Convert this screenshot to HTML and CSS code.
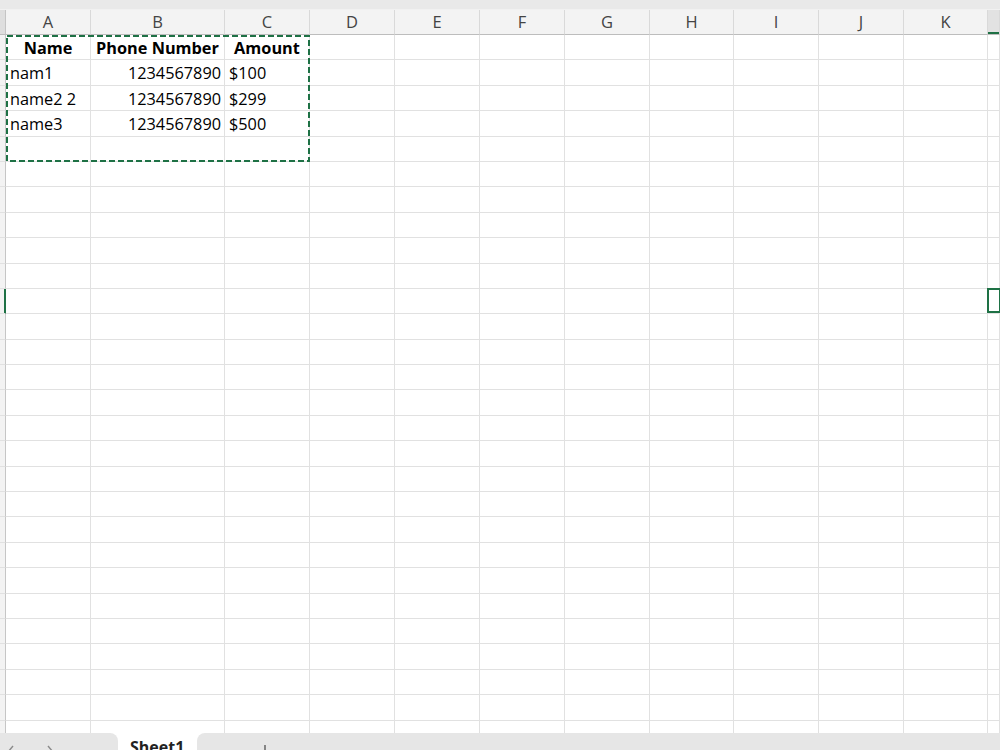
FILE: index.html
```html
<!DOCTYPE html>
<html lang="en">
<head>
    <meta charset="UTF-8">
    <meta name="viewport" content="width=device-width, initial-scale=1.0">
    <title>Book1 - Sheet1</title>
    <link rel="stylesheet" href="styles.css">
</head>
<body>
    <div class="topbar"></div>

    <div class="sheet">
        <div class="grid" id="grid">
            <div class="corner"></div>
            <div class="colhead">A</div>
            <div class="colhead">B</div>
            <div class="colhead">C</div>
            <div class="colhead">D</div>
            <div class="colhead">E</div>
            <div class="colhead">F</div>
            <div class="colhead">G</div>
            <div class="colhead">H</div>
            <div class="colhead">I</div>
            <div class="colhead">J</div>
            <div class="colhead">K</div>
            <div class="colhead selected"></div>
        </div>

        <!-- copy marquee around A1:C5 -->
        <svg class="marquee" width="304" height="127" viewBox="0 0 304 127">
            <rect x="1" y="1" width="302" height="125" fill="none" stroke="#1e7145" stroke-width="2" stroke-dasharray="6 3"/>
        </svg>
    </div>

    <div class="tabbar">
        <div class="nav">
            <svg width="118" height="17" viewBox="0 0 118 17">
                <polyline points="13,13 8,19" fill="none" stroke="#8a8a8a" stroke-width="1.4"/>
                <polyline points="48,13 53,19" fill="none" stroke="#8a8a8a" stroke-width="1.4"/>
            </svg>
        </div>
        <div class="tab">Sheet1</div>
        <div class="rest">
            <svg class="plus" width="12" height="12" viewBox="0 0 12 12">
                <line x1="6" y1="0" x2="6" y2="12" stroke="#444" stroke-width="1.2"/>
                <line x1="0" y1="6" x2="12" y2="6" stroke="#444" stroke-width="1.2"/>
            </svg>
        </div>
    </div>

    <script>
        const rows = [
            ['Name', 'Phone Number', 'Amount'],
            ['nam1', '1234567890', '$100'],
            ['name2 2', '1234567890', '$299'],
            ['name3', '1234567890', '$500']
        ];
        const activeRow = 10;   // row 11
        const activeCol = 11;   // column L

        const grid = document.getElementById('grid');
        for (let r = 0; r < 28; r++) {
            const head = document.createElement('div');
            head.className = 'rowhead' + (r === activeRow ? ' selected' : '');
            grid.appendChild(head);

            for (let c = 0; c < 12; c++) {
                const cell = document.createElement('div');
                let cls = 'cell';
                if (r === 0 && rows[r][c]) cls += ' head';
                else if (c === 1) cls += ' num';
                if (r === activeRow && c === activeCol) cls += ' active';
                cell.className = cls;
                cell.textContent = (rows[r] && rows[r][c]) || '';
                grid.appendChild(cell);
            }
        }
    </script>
</body>
</html>
```

FILE: styles.css
```css
* {
    box-sizing: border-box;
}
body {
    margin: 0;
    width: 1000px;
    height: 750px;
    overflow: hidden;
    display: flex;
    flex-direction: column;
    font-family: 'Open Sans', 'Noto Sans', sans-serif;
    background: #fff;
}
.topbar {
    flex: none;
    height: 10px;
    background: #e9e9e9;
    border-bottom: 1px solid #f1f1f1;
}
.sheet {
    position: relative;
    flex: 1;
    overflow: hidden;
}
.grid {
    display: grid;
    grid-template-columns: 6px 85px 134px 85px 85px 85px 85px 85px 84px 85px 85px 84px 1fr;
    grid-template-rows: 25px;
    grid-auto-rows: 25.4px;
}
.corner {
    background: #dedede;
    border-right: 1px solid #c4c4c4;
    border-bottom: 1px solid #bdbdbd;
}
.colhead {
    background: #f3f3f3;
    border-right: 1px solid #d9d9d9;
    border-bottom: 1px solid #bdbdbd;
    text-align: center;
    font-size: 16.5px;
    line-height: 24px;
    color: #444;
}
.colhead.selected {
    background: #e2e2e2;
    box-shadow: inset 0 -2px 0 #1e7145;
}
.rowhead {
    background: #f3f3f3;
    border-right: 1px solid #c6c6c6;
    border-bottom: 1px solid #e1e1e1;
}
.rowhead.selected {
    border-right-color: #1e7145;
    box-shadow: inset -1px 0 0 #1e7145;
}
.cell {
    border-right: 1px solid #e1e1e1;
    border-bottom: 1px solid #e1e1e1;
    padding: 2px 3px 0 4px;
    font-size: 16.3px;
    line-height: 22.4px;
    color: #000;
    white-space: nowrap;
    overflow: hidden;
}
.cell.head {
    font-weight: 700;
    text-align: center;
    padding-left: 3px;
}
.cell.num {
    text-align: right;
}
.cell.active {
    position: relative;
    overflow: visible;
}
.cell.active::after {
    content: '';
    position: absolute;
    left: -1px;
    top: -1px;
    right: -2px;
    bottom: 0;
    border: 2px solid #1e7145;
}
.marquee {
    position: absolute;
    left: 6px;
    top: 25px;
    pointer-events: none;
}
.tabbar {
    flex: none;
    height: 17px;
    display: flex;
    background: #fff;
}
.nav {
    width: 118px;
    background: #e6e6e6;
    border-top-right-radius: 8px;
}
.nav svg {
    display: block;
}
.tab {
    width: 79px;
    padding: 3px 0 0 12px;
    font-size: 16px;
    font-weight: 700;
    color: #222;
    white-space: nowrap;
}
.rest {
    flex: 1;
    background: #e6e6e6;
    border-top-left-radius: 8px;
}
.plus {
    display: block;
    margin: 12px 0 0 62px;
}
```
